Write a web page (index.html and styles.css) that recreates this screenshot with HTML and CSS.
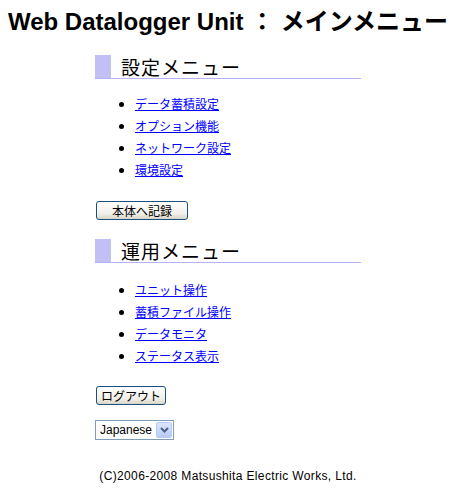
FILE: index.html
```html
<!DOCTYPE html>
<html lang="ja">
<head>
  <meta charset="UTF-8">
  <title>Web Datalogger Unit : メインメニュー</title>
  <link rel="stylesheet" href="styles.css">
</head>
<body>

<h1 class="title">Web Datalogger Unit ： メインメニュー</h1>

<div class="main">
  <div class="section-head">
    <div class="mark"></div>
    <span class="head-text">設定メニュー</span>
  </div>
  <ul class="menu">
    <li><a href="#">データ蓄積設定</a></li>
    <li><a href="#">オプション機能</a></li>
    <li><a href="#">ネットワーク設定</a></li>
    <li><a href="#">環境設定</a></li>
  </ul>
  <button class="btn btn-save">本体へ記録</button>

  <div class="section-head">
    <div class="mark"></div>
    <span class="head-text">運用メニュー</span>
  </div>
  <ul class="menu menu-second">
    <li><a href="#">ユニット操作</a></li>
    <li><a href="#">蓄積ファイル操作</a></li>
    <li><a href="#">データモニタ</a></li>
    <li><a href="#">ステータス表示</a></li>
  </ul>
  <button class="btn btn-logout">ログアウト</button>

  <div class="lang-select">
    <span class="lang-value">Japanese</span>
    <span class="lang-arrow">
      <svg width="9" height="6" viewBox="0 0 9 6"><path d="M1 1 L4.5 4.5 L8 1" fill="none" stroke="#4d6185" stroke-width="2"/></svg>
    </span>
  </div>
</div>

<div class="footer">(C)2006-2008 Matsushita Electric Works, Ltd.</div>

</body>
</html>
```

FILE: styles.css
```css
body {
  margin: 0;
  font-family: "Liberation Sans", "Noto Sans CJK JP", sans-serif;
  color: #000;
  background: #fff;
}
.title {
  margin: 8px 0 0;
  text-align: center;
  font-size: 24px;
  line-height: 28px;
  font-weight: bold;
  white-space: nowrap;
}
.main {
  width: 266px;
  margin: 0 auto;
}
.section-head {
  display: flex;
  align-items: center;
  height: 23px;
  border-bottom: 1px solid #b4b4f4;
  margin-top: 19px;
}
.mark {
  width: 16px;
  height: 23px;
  background: #c0c0f4;
}
.head-text {
  margin-left: 10px;
  font-size: 19px;
  letter-spacing: 1px;
  font-family: "Noto Sans CJK JP", sans-serif;
}
.menu {
  margin: 14px 0 0;
  padding-left: 40px;
  font-size: 12px;
  line-height: 22px;
  font-family: "Noto Sans CJK JP", sans-serif;
}
.menu-second {
  margin-top: 16px;
}
.menu a {
  color: #0000ff;
}
.btn {
  display: block;
  margin: 20px 0 0 1px;
  height: 19px;
  padding: 0;
  font-family: "Noto Sans CJK JP", sans-serif;
  font-size: 12px;
  line-height: 15px;
  white-space: nowrap;
  color: #000;
  border: 1px solid #1c4f7f;
  border-radius: 3px;
  background: linear-gradient(to bottom, #ffffff, #f0efe8 70%, #d8d4c6);
}
.btn-save {
  width: 92px;
}
.btn-logout {
  width: 70px;
  margin-top: 19px;
}
.lang-select {
  display: flex;
  align-items: center;
  justify-content: space-between;
  width: 73px;
  height: 18px;
  margin-top: 15px;
  padding-left: 4px;
  border: 1px solid #7f9db9;
  font-size: 12px;
}
.lang-value {
  line-height: 18px;
}
.lang-arrow {
  display: flex;
  align-items: center;
  justify-content: center;
  width: 16px;
  height: 16px;
  margin-right: 1px;
  border: 1px solid #b8cbf2;
  border-radius: 2px;
  background: linear-gradient(to bottom, #dbe6fb, #b6cbf5);
  box-sizing: border-box;
}
.footer {
  margin-top: 28px;
  text-align: center;
  font-size: 12px;
  line-height: 16px;
  letter-spacing: 0.35px;
}
```
